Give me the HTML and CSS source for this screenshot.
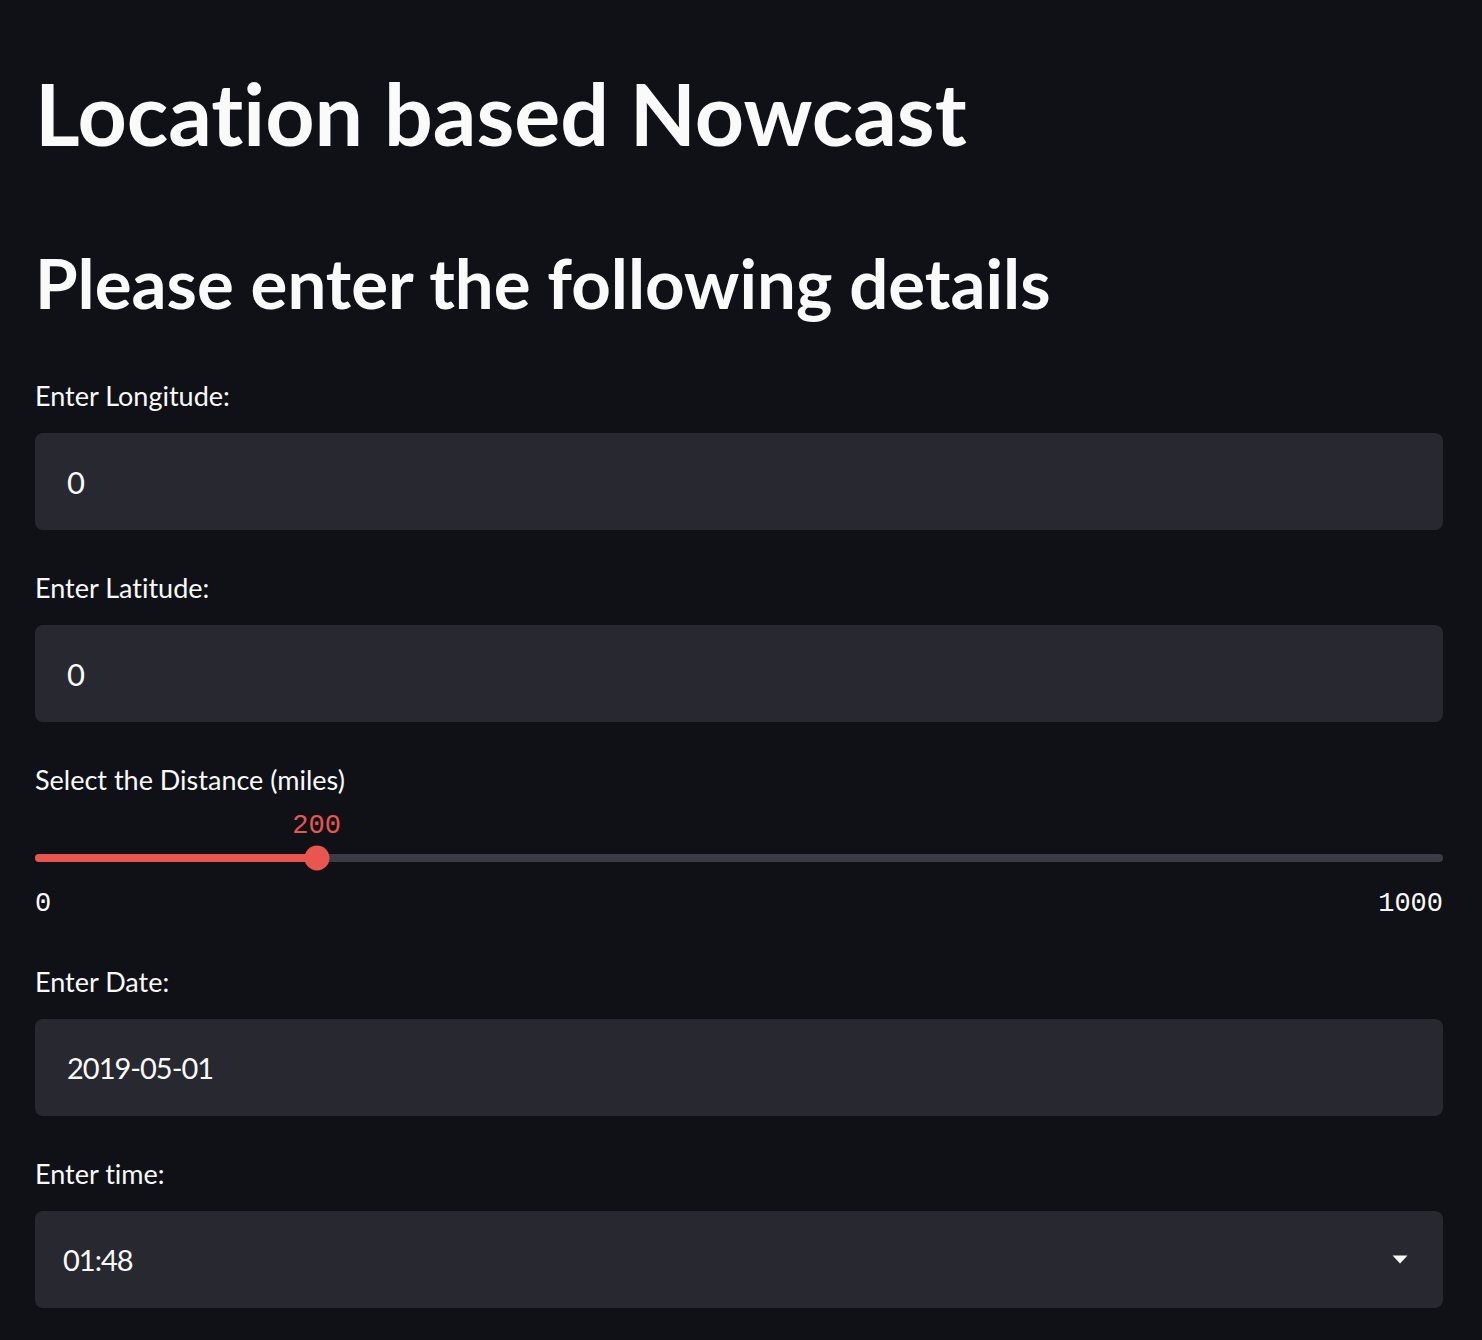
FILE: index.html
```html
<!DOCTYPE html>
<html>
<head>
<meta charset="utf-8">
<link rel="stylesheet" href="styles.css">
</head>
<body>
<main class="page">
  <h1 class="title">Location based Nowcast</h1>
  <h2 class="subtitle">Please enter the following details</h2>

  <section class="field">
    <label class="label">Enter Longitude:</label>
    <div class="input"><span class="num">0</span></div>
  </section>

  <section class="field">
    <label class="label">Enter Latitude:</label>
    <div class="input"><span class="num">0</span></div>
  </section>

  <section class="field slider-field">
    <label class="label">Select the Distance (miles)</label>
    <div class="slider">
      <div class="slider-value" style="left: 20%">200</div>
      <div class="track">
        <div class="fill" style="width: 20%"></div>
        <div class="thumb" style="left: 20%"></div>
      </div>
    </div>
    <div class="ticks"><span>0</span><span>1000</span></div>
  </section>

  <section class="field">
    <label class="label">Enter Date:</label>
    <div class="input"><span class="date">2019-05-01</span></div>
  </section>

  <section class="field">
    <label class="label">Enter time:</label>
    <div class="input select"><span class="time">01:48</span>
      <svg class="caret" width="16" height="9" viewBox="0 0 16 9"><path d="M0.5 0.5 L15.5 0.5 L8 8.5 Z" fill="#fafafa"/></svg>
    </div>
  </section>
</main>
</body>
</html>
```
FILE: styles.css
```css
html, body {
  margin: 0;
  padding: 0;
  background: #0f1117;
}
body {
  color: #fafafa;
  font-family: Lato, "Noto Sans", sans-serif;
  font-variant-ligatures: none;
  font-feature-settings: "liga" 0, "clig" 0;
}
.page {
  width: 1408px;
  margin-left: 35px;
  padding-top: 58px;
  padding-bottom: 30px;
  display: flex;
  flex-direction: column;
}
.title {
  margin: 0;
  font-size: 86px;
  font-weight: 700;
  line-height: 110px;
  letter-spacing: 0;
}
.subtitle {
  margin: 70px 0 0 0;
  font-size: 69px;
  font-weight: 700;
  line-height: 90px;
  letter-spacing: 0;
}
.field {
  display: flex;
  flex-direction: column;
  margin-top: 38px;
}
.subtitle + .field {
  margin-top: 48px;
}
.label {
  font-size: 27px;
  line-height: 40px;
  height: 40px;
  margin-bottom: 17px;
}
.input {
  height: 97px;
  border-radius: 8px;
  background: #272830;
  display: flex;
  align-items: center;
  padding-left: 32px;
  box-sizing: border-box;
}
.num {
  font-size: 31px;
}
.date {
  font-size: 29px;
  letter-spacing: -1px;
}
.select {
  padding-left: 28px;
  padding-right: 35px;
  justify-content: space-between;
}
.time {
  font-size: 29px;
  letter-spacing: -1px;
}
.caret {
  display: block;
  width: 16px;
  height: 9px;
}
.slider-field .label {
  margin-bottom: 0;
}
.slider {
  position: relative;
  height: 89px;
}
.slider-value {
  position: absolute;
  top: 11px;
  transform: translateX(-50%);
  color: #e8564f;
  font-family: "Liberation Mono", "DejaVu Sans Mono", monospace;
  font-size: 27px;
  line-height: 30px;
}
.track {
  position: absolute;
  left: 0;
  right: 0;
  top: 54px;
  height: 8px;
  border-radius: 4px;
  background: #3a3b45;
}
.fill {
  height: 100%;
  border-radius: 4px;
  background: #e8564f;
}
.thumb {
  position: absolute;
  top: 50%;
  width: 25px;
  height: 25px;
  border-radius: 50%;
  background: #e8564f;
  transform: translate(-50%, -50%);
}
.ticks {
  display: flex;
  justify-content: space-between;
  font-family: "Liberation Mono", "DejaVu Sans Mono", monospace;
  font-size: 27px;
  line-height: 30px;
}
.slider-field + .field {
  margin-top: 43px;
}
```
